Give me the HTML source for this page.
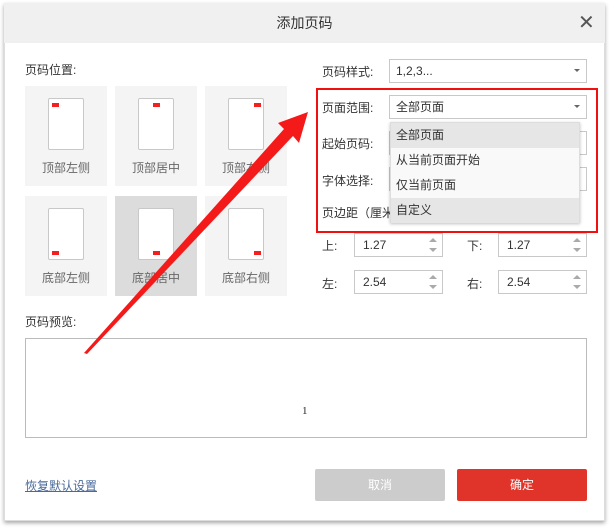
<!DOCTYPE html>
<html><head><meta charset="utf-8"><style>
*{margin:0;padding:0;box-sizing:border-box}
body{width:610px;height:528px;background:#fff;font-family:"Liberation Sans","Noto Sans CJK SC",sans-serif;font-size:12px;color:#333;position:relative;overflow:hidden}
.a{position:absolute}
.dlg{left:4px;top:3px;width:601px;height:518px;border:1px solid #ddd;box-shadow:0 2px 4px rgba(0,0,0,.35);background:#fff}
.title{left:4px;top:3px;width:601px;height:40px;background:#f0f0f0;text-align:center;line-height:40px;font-size:14px;color:#333}
.cell{width:82px;height:100px;background:#f4f4f4;text-align:center;color:#666;font-size:12px}
.cell.sel{background:#dcdcdc}
.pg{position:absolute;left:23px;top:12px;width:36px;height:52px;background:#fff;border:1px solid #c8c8c8;border-radius:2px}
.mk{position:absolute;width:7px;height:4px;background:#f42020}
.cl{position:absolute;left:0;right:0;top:73px}
.inp{border:1px solid #c8c8c8;background:#fff;padding-left:6px;font-size:12px;color:#333}
.caret{position:absolute;right:6px;top:9px;border-left:3px solid transparent;border-right:3px solid transparent;border-top:3px solid #666}
.sp{position:absolute;right:5px;width:0;border-left:4px solid transparent;border-right:4px solid transparent}
</style></head><body>
<div class="a dlg"></div>
<div class="a title">添加页码</div>
<div class="a" style="left:578px;top:13px;font-size:20px;color:#555;line-height:20px">✕</div>
<div class="a" style="left:25px;top:61px;font-size:12px">页码位置:</div>

<div class="a cell" style="left:25px;top:86px"><div class="pg"><div class="mk" style="left:3px;top:4px"></div></div><div class="cl">顶部左侧</div></div>
<div class="a cell" style="left:115px;top:86px"><div class="pg"><div class="mk" style="left:14px;top:4px"></div></div><div class="cl">顶部居中</div></div>
<div class="a cell" style="left:205px;top:86px"><div class="pg"><div class="mk" style="left:25px;top:4px"></div></div><div class="cl">顶部右侧</div></div>
<div class="a cell" style="left:25px;top:196px"><div class="pg"><div class="mk" style="left:3px;top:42px"></div></div><div class="cl">底部左侧</div></div>
<div class="a cell sel" style="left:115px;top:196px"><div class="pg"><div class="mk" style="left:14px;top:42px"></div></div><div class="cl">底部居中</div></div>
<div class="a cell" style="left:205px;top:196px"><div class="pg"><div class="mk" style="left:25px;top:42px"></div></div><div class="cl">底部右侧</div></div>

<div class="a" style="left:322px;top:63px">页码样式:</div>
<div class="a inp" style="left:389px;top:59px;width:198px;height:24px;line-height:22px">1,2,3...<div class="caret"></div></div>
<div class="a" style="left:322px;top:99px">页面范围:</div>
<div class="a inp" style="left:389px;top:95px;width:198px;height:24px;line-height:22px">全部页面<div class="caret"></div></div>
<div class="a" style="left:322px;top:135px">起始页码:</div>
<div class="a inp" style="left:389px;top:131px;width:198px;height:24px"></div>
<div class="a" style="left:322px;top:172px">字体选择:</div>
<div class="a inp" style="left:389px;top:167px;width:198px;height:24px"></div>
<div class="a" style="left:322px;top:204px">页边距（厘米）</div>

<div class="a" style="left:390px;top:122px;width:190px;height:101px;background:#f9f9f9;border:1px solid #ddd;box-shadow:0 1px 3px rgba(0,0,0,.25);font-size:12px">
<div style="height:25px;line-height:25px;padding-left:5px;background:#e6e6e6">全部页面</div>
<div style="height:25px;line-height:25px;padding-left:5px">从当前页面开始</div>
<div style="height:25px;line-height:25px;padding-left:5px">仅当前页面</div>
<div style="height:25px;line-height:25px;padding-left:5px;background:#e6e6e6">自定义</div>
</div>
<div class="a" style="left:316px;top:88px;width:282px;height:145px;border:2px solid #f01010"></div>

<div class="a" style="left:322px;top:237px">上:</div>
<div class="a inp" style="left:354px;top:233px;width:89px;height:24px;line-height:22px;padding-left:8px">1.27<div class="sp" style="top:4px;border-bottom:4px solid #aaa"></div><div class="sp" style="top:14px;border-top:4px solid #aaa"></div></div>
<div class="a" style="left:467px;top:237px">下:</div>
<div class="a inp" style="left:498px;top:233px;width:89px;height:24px;line-height:22px;padding-left:8px">1.27<div class="sp" style="top:4px;border-bottom:4px solid #aaa"></div><div class="sp" style="top:14px;border-top:4px solid #aaa"></div></div>
<div class="a" style="left:322px;top:275px">左:</div>
<div class="a inp" style="left:354px;top:270px;width:89px;height:24px;line-height:22px;padding-left:8px">2.54<div class="sp" style="top:4px;border-bottom:4px solid #aaa"></div><div class="sp" style="top:14px;border-top:4px solid #aaa"></div></div>
<div class="a" style="left:467px;top:275px">右:</div>
<div class="a inp" style="left:498px;top:270px;width:89px;height:24px;line-height:22px;padding-left:8px">2.54<div class="sp" style="top:4px;border-bottom:4px solid #aaa"></div><div class="sp" style="top:14px;border-top:4px solid #aaa"></div></div>

<div class="a" style="left:25px;top:313px">页码预览:</div>
<div class="a" style="left:25px;top:338px;width:562px;height:100px;border:1px solid #bbb"></div>
<div class="a" style="left:302px;top:405px;font-family:'Liberation Serif',serif;font-size:11px;color:#222">1</div>

<div class="a" style="left:25px;top:477px;color:#4a6a9a;text-decoration:underline">恢复默认设置</div>
<div class="a" style="left:315px;top:469px;width:130px;height:32px;background:#ccc;color:#fff;text-align:center;line-height:32px;border-radius:2px">取消</div>
<div class="a" style="left:457px;top:469px;width:130px;height:32px;background:#e0342a;color:#fff;text-align:center;line-height:32px;border-radius:2px">确定</div>

<svg class="a" style="left:0;top:0" width="610" height="528"><polygon points="84,353 284,129 278,123 308,112 299,143 293,136 87,354" fill="#f41a1a"/></svg>
</body></html>
